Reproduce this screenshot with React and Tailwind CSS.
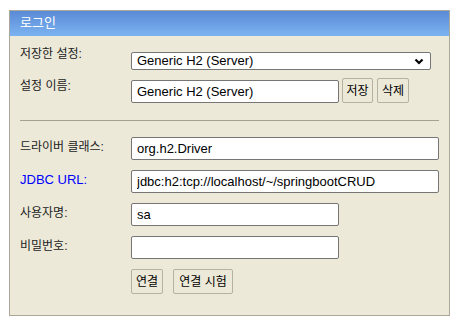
import React from "react";

const ko = { fontFamily: '"Liberation Sans", "Noto Sans CJK KR", sans-serif' };

const Field = ({ value, wide }) => (
  <input
    readOnly
    value={value}
    className={`block ${wide ? "w-[309px]" : "w-[208px]"} h-[23px] border border-[#767676] rounded-[2px] bg-white px-[5px] text-[13px] text-black outline-none`}
    style={ko}
  />
);

const Btn = ({ children, w }) => (
  <button
    className={`block ${w} h-[25px] border border-[#b5b1a3] rounded-[2px] bg-[#ece9d8] text-[12px] text-black leading-none`}
    style={ko}
  >
    {children}
  </button>
);

const Row = ({ label, blue, children, labelTop = "mt-[2px]" }) => (
  <div className="flex items-start">
    <div
      className={`w-[111px] shrink-0 ${labelTop} ${blue ? "text-[13px] text-[#0000ff]" : "text-[12px] text-[#222]"} leading-[16px]`}
      style={ko}
    >
      {label}
    </div>
    {children}
  </div>
);

export default function App() {
  return (
    <div className="min-h-[326px] bg-white pl-[9px] pt-[10px] leading-none" style={ko}>
      <div className="w-[441px] h-[306px] border border-[#aca899] bg-[#ece9d8] flex flex-col">
        {/* header */}
        <div className="h-[25px] bg-gradient-to-b from-[#5a8ad5] to-[#7cb3f1] px-[10px] text-[13px] leading-[24px] text-white">
          로그인
        </div>

        <div className="px-[10px] pt-[10px]">
          {/* saved settings */}
          <Row label="저장한 설정:" labelTop="mt-0">
            <div className="relative mt-[6px]">
              <select
                defaultValue="h2server"
                className="block w-[300px] h-[18px] appearance-none border border-[#767676] rounded-[2px] bg-white pl-[5px] text-[13px] leading-[16px] text-black outline-none"
                style={ko}
              >
                <option value="h2server">Generic H2 (Server)</option>
              </select>
              <svg
                className="absolute right-[7px] top-[6px] pointer-events-none"
                width="10"
                height="7"
                viewBox="0 0 10 7"
              >
                <path d="M1.5 1.5 L5 5 L8.5 1.5" fill="none" stroke="#000" strokeWidth="2.2" />
              </svg>
            </div>
          </Row>

          <div className="mt-[8px]">
            <Row label="설정 이름:" labelTop="mt-0">
              <div className="mt-[2px]">
                <Field value="Generic H2 (Server)" />
              </div>
              <div className="flex gap-[4px] ml-[3px]">
                <Btn w="w-[31px]">저장</Btn>
                <Btn w="w-[32px]">삭제</Btn>
              </div>
            </Row>
          </div>

          <div className="mt-[17px] border-t border-[#a5a292]" />

          <div className="mt-[16px] flex flex-col gap-[10px]">
            <Row label="드라이버 클래스:">
              <Field value="org.h2.Driver" wide />
            </Row>
            <Row label="JDBC URL:" blue>
              <Field value="jdbc:h2:tcp://localhost/~/springbootCRUD" wide />
            </Row>
            <Row label="사용자명:">
              <Field value="sa" />
            </Row>
            <Row label="비밀번호:">
              <Field value="" />
            </Row>
            <div className="flex pl-[111px] gap-[10px]">
              <Btn w="w-[32px]">연결</Btn>
              <Btn w="w-[60px]">연결 시험</Btn>
            </div>
          </div>
        </div>
      </div>
    </div>
  );
}
